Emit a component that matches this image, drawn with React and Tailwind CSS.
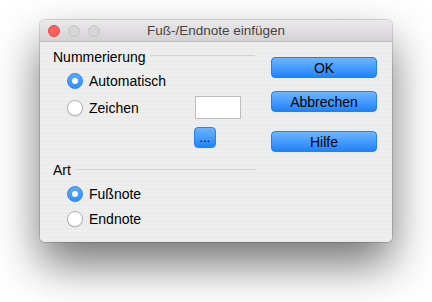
import React from "react";

function Radio({ checked, label }) {
  return (
    <div className="flex items-center h-[16px] pl-[27px]">
      {checked ? (
        <div className="w-[16px] h-[16px] rounded-full bg-gradient-to-b from-[#5aa9fc] to-[#2f8ffb] border border-[#2d86ee] flex items-center justify-center">
          <div className="w-[6px] h-[6px] rounded-full bg-white" />
        </div>
      ) : (
        <div className="w-[16px] h-[16px] rounded-full bg-white border border-[#b4b4b4] shadow-[0_0.5px_1px_rgba(0,0,0,0.15)]" />
      )}
      <span className="ml-[6px] text-[14px] leading-[16px] text-black">{label}</span>
    </div>
  );
}

function Btn({ children, className = "" }) {
  return (
    <div
      className={
        "h-[21px] rounded-[4px] bg-gradient-to-b from-[#6bb5fd] to-[#1b83fb] border border-[#2a7ef0] flex items-center justify-center text-[14px] leading-[16px] text-black " +
        className
      }
    >
      {children}
    </div>
  );
}

export default function App() {
  return (
    <div
      className="w-[432px] h-[302px] bg-white pt-[20px] pl-[40px]"
      style={{ fontFamily: '"Liberation Sans", Arial, Helvetica, sans-serif' }}
    >
      <div className="w-[352px] h-[222px] rounded-[5px] overflow-hidden flex flex-col shadow-[0_22px_45px_rgba(0,0,0,0.55),0_0_0_1px_rgba(0,0,0,0.14)]">
        <div className="h-[22px] shrink-0 grid grid-cols-[1fr_auto_1fr] items-center bg-gradient-to-b from-[#ebe9eb] to-[#d4d2d4] border-b border-[#bdbdbd]">
          <div className="flex items-center gap-[8px] pl-[8px]">
            <div className="w-[12px] h-[12px] rounded-full bg-[#fc605c] border border-[#e1473f]" />
            <div className="w-[12px] h-[12px] rounded-full bg-[#d6d6d6] border border-[#c4c4c4]" />
            <div className="w-[12px] h-[12px] rounded-full bg-[#d6d6d6] border border-[#c4c4c4]" />
          </div>
          <div className="text-[13.5px] leading-[16px] text-[#444]">Fuß-/Endnote einfügen</div>
          <div />
        </div>
        <div className="flex-1 flex bg-[repeating-linear-gradient(180deg,#eeeeee_0px,#eeeeee_2px,#ebebeb_2px,#ebebeb_4px)]">
          <div className="w-[215px] flex flex-col pt-[7px] pl-[13px]">
            <div className="flex items-center h-[16px]">
              <span className="text-[14px] leading-[16px] text-black">Nummerierung</span>
              <div className="flex-1 ml-[4px] mb-[3px] h-px bg-[#d2d2d2]" />
            </div>
            <div className="mt-[8px] -ml-[13px]">
              <Radio checked label="Automatisch" />
            </div>
            <div className="mt-[7px] -ml-[13px] h-[23px] flex items-center">
              <div className="flex-1">
                <Radio label="Zeichen" />
              </div>
              <div className="w-[46px] h-[23px] bg-white border border-[#bcbcbc] mr-[14px]" />
            </div>
            <div className="mt-[8px] h-[20px] flex justify-end pr-[39px]">
              <div className="w-[22px] h-[21px] rounded-[4px] bg-gradient-to-b from-[#6bb5fd] to-[#1b83fb] border border-[#2a7ef0] flex items-end justify-center pb-[3px] text-[13px] leading-[13px] text-black">
                ...
              </div>
            </div>
            <div className="mt-[15px] flex items-center h-[16px]">
              <span className="text-[14px] leading-[16px] text-black">Art</span>
              <div className="flex-1 ml-[4px] mb-[1px] h-px bg-[#d2d2d2]" />
            </div>
            <div className="mt-[8px] -ml-[13px]">
              <Radio checked label="Fußnote" />
            </div>
            <div className="mt-[9px] -ml-[13px]">
              <Radio label="Endnote" />
            </div>
          </div>
          <div className="ml-[16px] w-[106px] flex flex-col pt-[15px]">
            <Btn>OK</Btn>
            <Btn className="mt-[13px]">Abbrechen</Btn>
            <Btn className="mt-[19px]">Hilfe</Btn>
          </div>
        </div>
      </div>
    </div>
  );
}
